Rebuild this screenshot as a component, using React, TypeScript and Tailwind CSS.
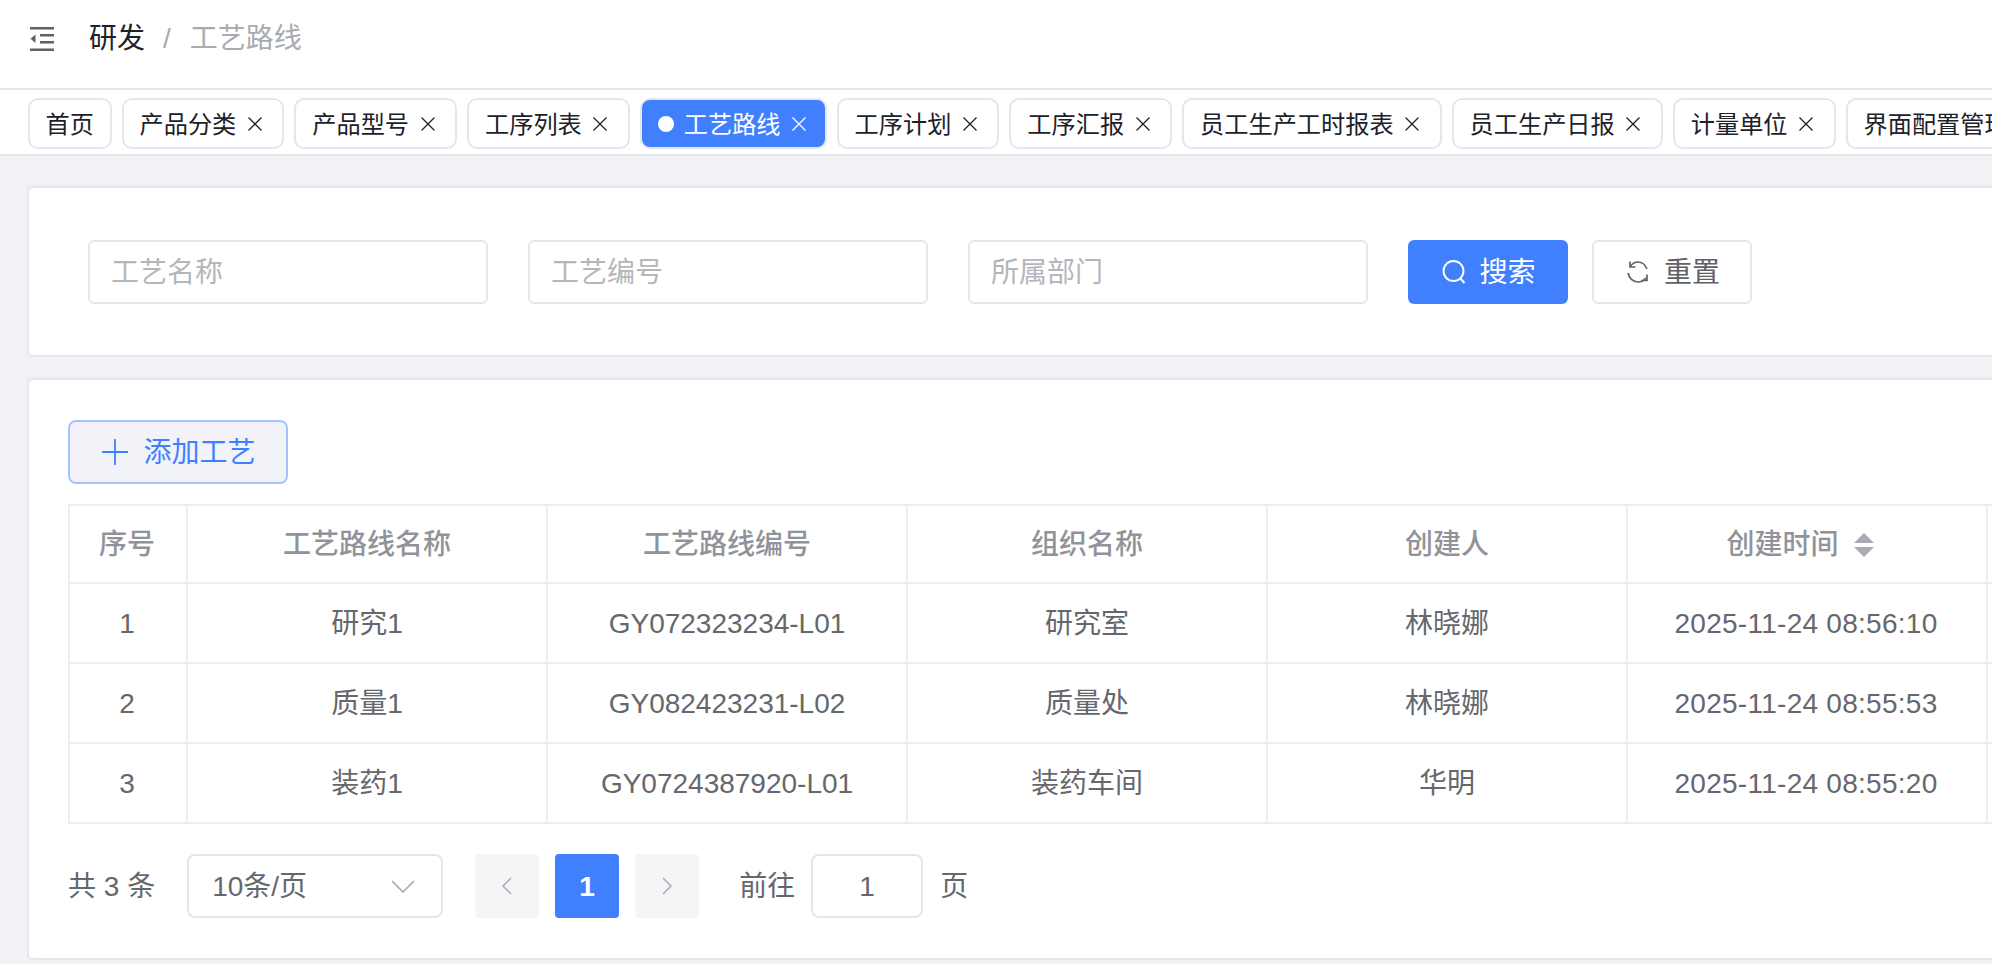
const FONT = "font-['Liberation_Sans','Noto_Sans_CJK_SC',sans-serif]";

const tabs = ['产品分类', '产品型号', '工序列表', '工艺路线', '工序计划', '工序汇报', '员工生产工时报表', '员工生产日报', '计量单位', '界面配置管理'];

const columns = ['序号', '工艺路线名称', '工艺路线编号', '组织名称', '创建人'];

const rows = [
  ['1', '研究1', 'GY072323234-L01', '研究室', '林晓娜', '2025-11-24 08:56:10'],
  ['2', '质量1', 'GY082423231-L02', '质量处', '林晓娜', '2025-11-24 08:55:53'],
  ['3', '装药1', 'GY0724387920-L01', '装药车间', '华明', '2025-11-24 08:55:20'],
];

function CloseIcon() {
  return (
    <svg viewBox="0 0 16 16" className="w-4 h-4 shrink-0" fill="none" stroke="currentColor" strokeWidth="1.3">
      <path d="M1.5 1.5 14.5 14.5M14.5 1.5 1.5 14.5" />
    </svg>
  );
}

function Tab({ label, active }: { label: string; active?: boolean }) {
  if (active) {
    return (
      <div className="h-[51px] shrink-0 flex items-center pl-[16px] pr-[18px] rounded-[10px] border-2 border-[#e5e6eb] bg-[#4080ff] text-white">
        <span className="w-[16px] h-[16px] rounded-full bg-white mr-[10px]" />
        <span className="pt-[3px]">{label}</span>
        <span className="ml-[10px]"><CloseIcon /></span>
      </div>
    );
  }
  return (
    <div className="h-[51px] shrink-0 flex items-center pl-[16px] pr-[19.5px] rounded-[10px] border-2 border-[#e5e6eb] bg-white text-[#1d2129]">
      <span className="pt-[3px]">{label}</span>
      <span className="ml-[10.5px]"><CloseIcon /></span>
    </div>
  );
}

function FilterInput({ placeholder }: { placeholder: string }) {
  return (
    <div className="w-[400px] h-[64px] flex items-center pl-[21px] pt-[2px] rounded-[6px] border-2 border-[#e5e6eb] text-[#b4b6bb] bg-white">
      {placeholder}
    </div>
  );
}

export default function App() {
  return (
    <div className={`${FONT} w-full h-screen overflow-hidden bg-[#f1f2f6] text-[28px] flex flex-col`}>
      <header className="h-[90px] shrink-0 bg-white border-b-2 border-[#e5e6eb] flex items-center pl-[30px] pb-[10px]">
        <svg viewBox="0 0 24 24" className="w-[24px] h-[24px] text-[#5f6166]" fill="currentColor">
          <rect x="0" y="0" width="24" height="2.5" />
          <rect x="10" y="7" width="14" height="2.5" />
          <rect x="10" y="14" width="14" height="2.5" />
          <rect x="0" y="21.5" width="24" height="2.5" />
          <path d="M5.5 7.5V16L0.5 11.75Z" />
        </svg>
        <span className="ml-[35px] text-[#1d2129]">研发</span>
        <span className="ml-[18px] text-[#a8abb2]">/</span>
        <span className="ml-[19px] text-[#a8abb2]">工艺路线</span>
      </header>

      <div className="h-[66px] shrink-0 bg-white border-b-2 border-[#e5e6eb] pt-[8px] pl-[28px] flex gap-[10px] text-[24.2px] overflow-hidden">
        <div className="h-[51px] w-[83.5px] pt-[3px] shrink-0 flex items-center justify-center rounded-[10px] border-2 border-[#e5e6eb] text-[#1d2129]">
          首页
        </div>
        {tabs.map((t) => (
          <Tab key={t} label={t} active={t === '工艺路线'} />
        ))}
      </div>

      <div className="pl-[27px] pt-[30px] w-[2100px]">
        <section className="h-[171px] pt-[1px] rounded-[6px] border-2 border-[#e5e6eb] bg-white flex items-center pl-[59px] gap-[40px]">
          <FilterInput placeholder="工艺名称" />
          <FilterInput placeholder="工艺编号" />
          <FilterInput placeholder="所属部门" />
          <div className="flex gap-[24px]">
            <button className="w-[160px] h-[64px] pl-[2px] rounded-[6px] bg-[#4080ff] text-white flex items-center justify-center gap-[13px]">
              <svg viewBox="0 0 24 24" className="w-[24px] h-[24px]" fill="none" stroke="currentColor" strokeWidth="1.9">
                <circle cx="11.5" cy="11" r="10" />
                <path d="M18.5 18.5 22.5 23" />
              </svg>
              <span className="pt-[2px]">搜索</span>
            </button>
            <button className="w-[160px] h-[64px] pl-[2px] rounded-[6px] border-2 border-[#e5e6eb] bg-white text-[#5f6166] flex items-center justify-center gap-[14px]">
              <svg viewBox="4 8 24 24" className="w-[24px] h-[24px]" fill="none" stroke="currentColor" strokeWidth="1.7">
                <path d="M25 17C23 12 19.500 10 16 10 13 10 10.500 11.500 8.500 14" />
                <path d="M8 9.500V15H13.500" />
                <path d="M6 21C7 26 11 30 16 30 19 30 22 28.500 24 26" />
                <path d="M25 22.500V28.500H19.500" />
              </svg>
              <span className="pt-[2px]">重置</span>
            </button>
          </div>
        </section>

        <section className="mt-[21px] h-[582px] rounded-[6px] border-2 border-[#e5e6eb] bg-white pl-[39px] pt-[40px]">
          <button className="w-[220px] h-[64px] pl-[2px] rounded-[8px] border-2 border-[#a3c2ff] bg-[#f1f3f9] text-[#4080ff] flex items-center justify-center gap-[15px]">
            <svg viewBox="0 0 26 26" className="w-[26px] h-[26px]" fill="none" stroke="currentColor" strokeWidth="1.8">
              <path d="M13 0V26M0 13H26" />
            </svg>
            <span className="pt-[1px]">添加工艺</span>
          </button>

          <table className="mt-[20px] table-fixed border-collapse w-[2000px]">
            <colgroup>
              <col className="w-[118px]" />
              <col className="w-[360px]" />
              <col className="w-[360px]" />
              <col className="w-[360px]" />
              <col className="w-[360px]" />
              <col className="w-[360px]" />
              <col />
            </colgroup>
            <thead>
              <tr className="h-[78px]">
                {columns.map((c, i) => (
                  <th key={c} className={`border-2 border-[#eceef2] pt-[2px] font-medium text-[#909399] ${i === 0 ? 'pr-[2px]' : ''}`}>{c}</th>
                ))}
                <th className="border-2 border-[#eceef2] pt-[2px] font-medium text-[#909399]">
                  <span className="inline-flex items-center gap-[15px] pr-[14px]">
                    创建时间
                    <svg viewBox="0 0 20 24" className="w-[20px] h-[24px] text-[#a8abb2]" fill="currentColor">
                      <path d="M10 0 20 10H0ZM0 14H20L10 24Z" />
                    </svg>
                  </span>
                </th>
                <th className="border-2 border-[#eceef2]" />
              </tr>
            </thead>
            <tbody>
              {rows.map((r) => (
                <tr key={r[0]} className="h-[80px]">
                  {r.map((v, i) => (
                    <td key={i} className={`border-2 border-[#eceef2] pt-[2px] text-center text-[#65676c] ${i === 0 ? 'pr-[2px]' : ''} ${i === 5 ? 'pr-[2px] tracking-[0.27px]' : ''}`}>{v}</td>
                  ))}
                  <td className="border-2 border-[#eceef2]" />
                </tr>
              ))}
            </tbody>
          </table>

          <div className="mt-[30px] flex items-center text-[#65676c]">
            <span className="pt-[2px]">共 3 条</span>
            <div className="ml-[32px] w-[256px] h-[64px] rounded-[8px] border-2 border-[#e5e6eb] flex items-center justify-between pl-[23px] pr-[26px]">
              <span className="pt-[2px]">10条/页</span>
              <svg viewBox="0 0 24 13" className="w-[24px] h-[13px] text-[#a8abb2]" fill="none" stroke="currentColor" strokeWidth="1.7">
                <path d="M1 1 12 12 23 1" />
              </svg>
            </div>
            <div className="ml-[32px] w-[64px] h-[64px] rounded-[4px] bg-[#f4f5f7] flex items-center justify-center">
              <svg viewBox="0 0 10 18" className="w-[10px] h-[18px] text-[#a8abb2]" fill="none" stroke="currentColor" strokeWidth="1.5">
                <path d="M9 1 1 9 9 17" />
              </svg>
            </div>
            <div className="ml-[16px] w-[64px] h-[64px] pt-[2px] rounded-[4px] bg-[#4080ff] text-white font-bold flex items-center justify-center">1</div>
            <div className="ml-[16px] w-[64px] h-[64px] rounded-[4px] bg-[#f4f5f7] flex items-center justify-center">
              <svg viewBox="0 0 10 18" className="w-[10px] h-[18px] text-[#a8abb2]" fill="none" stroke="currentColor" strokeWidth="1.5">
                <path d="M1 1 9 9 1 17" />
              </svg>
            </div>
            <span className="ml-[40px] pt-[2px]">前往</span>
            <div className="ml-[16px] w-[112px] h-[64px] pt-[2px] rounded-[8px] border-2 border-[#e5e6eb] flex items-center justify-center">1</div>
            <span className="ml-[17px] pt-[2px]">页</span>
          </div>
        </section>
      </div>
    </div>
  );
}
